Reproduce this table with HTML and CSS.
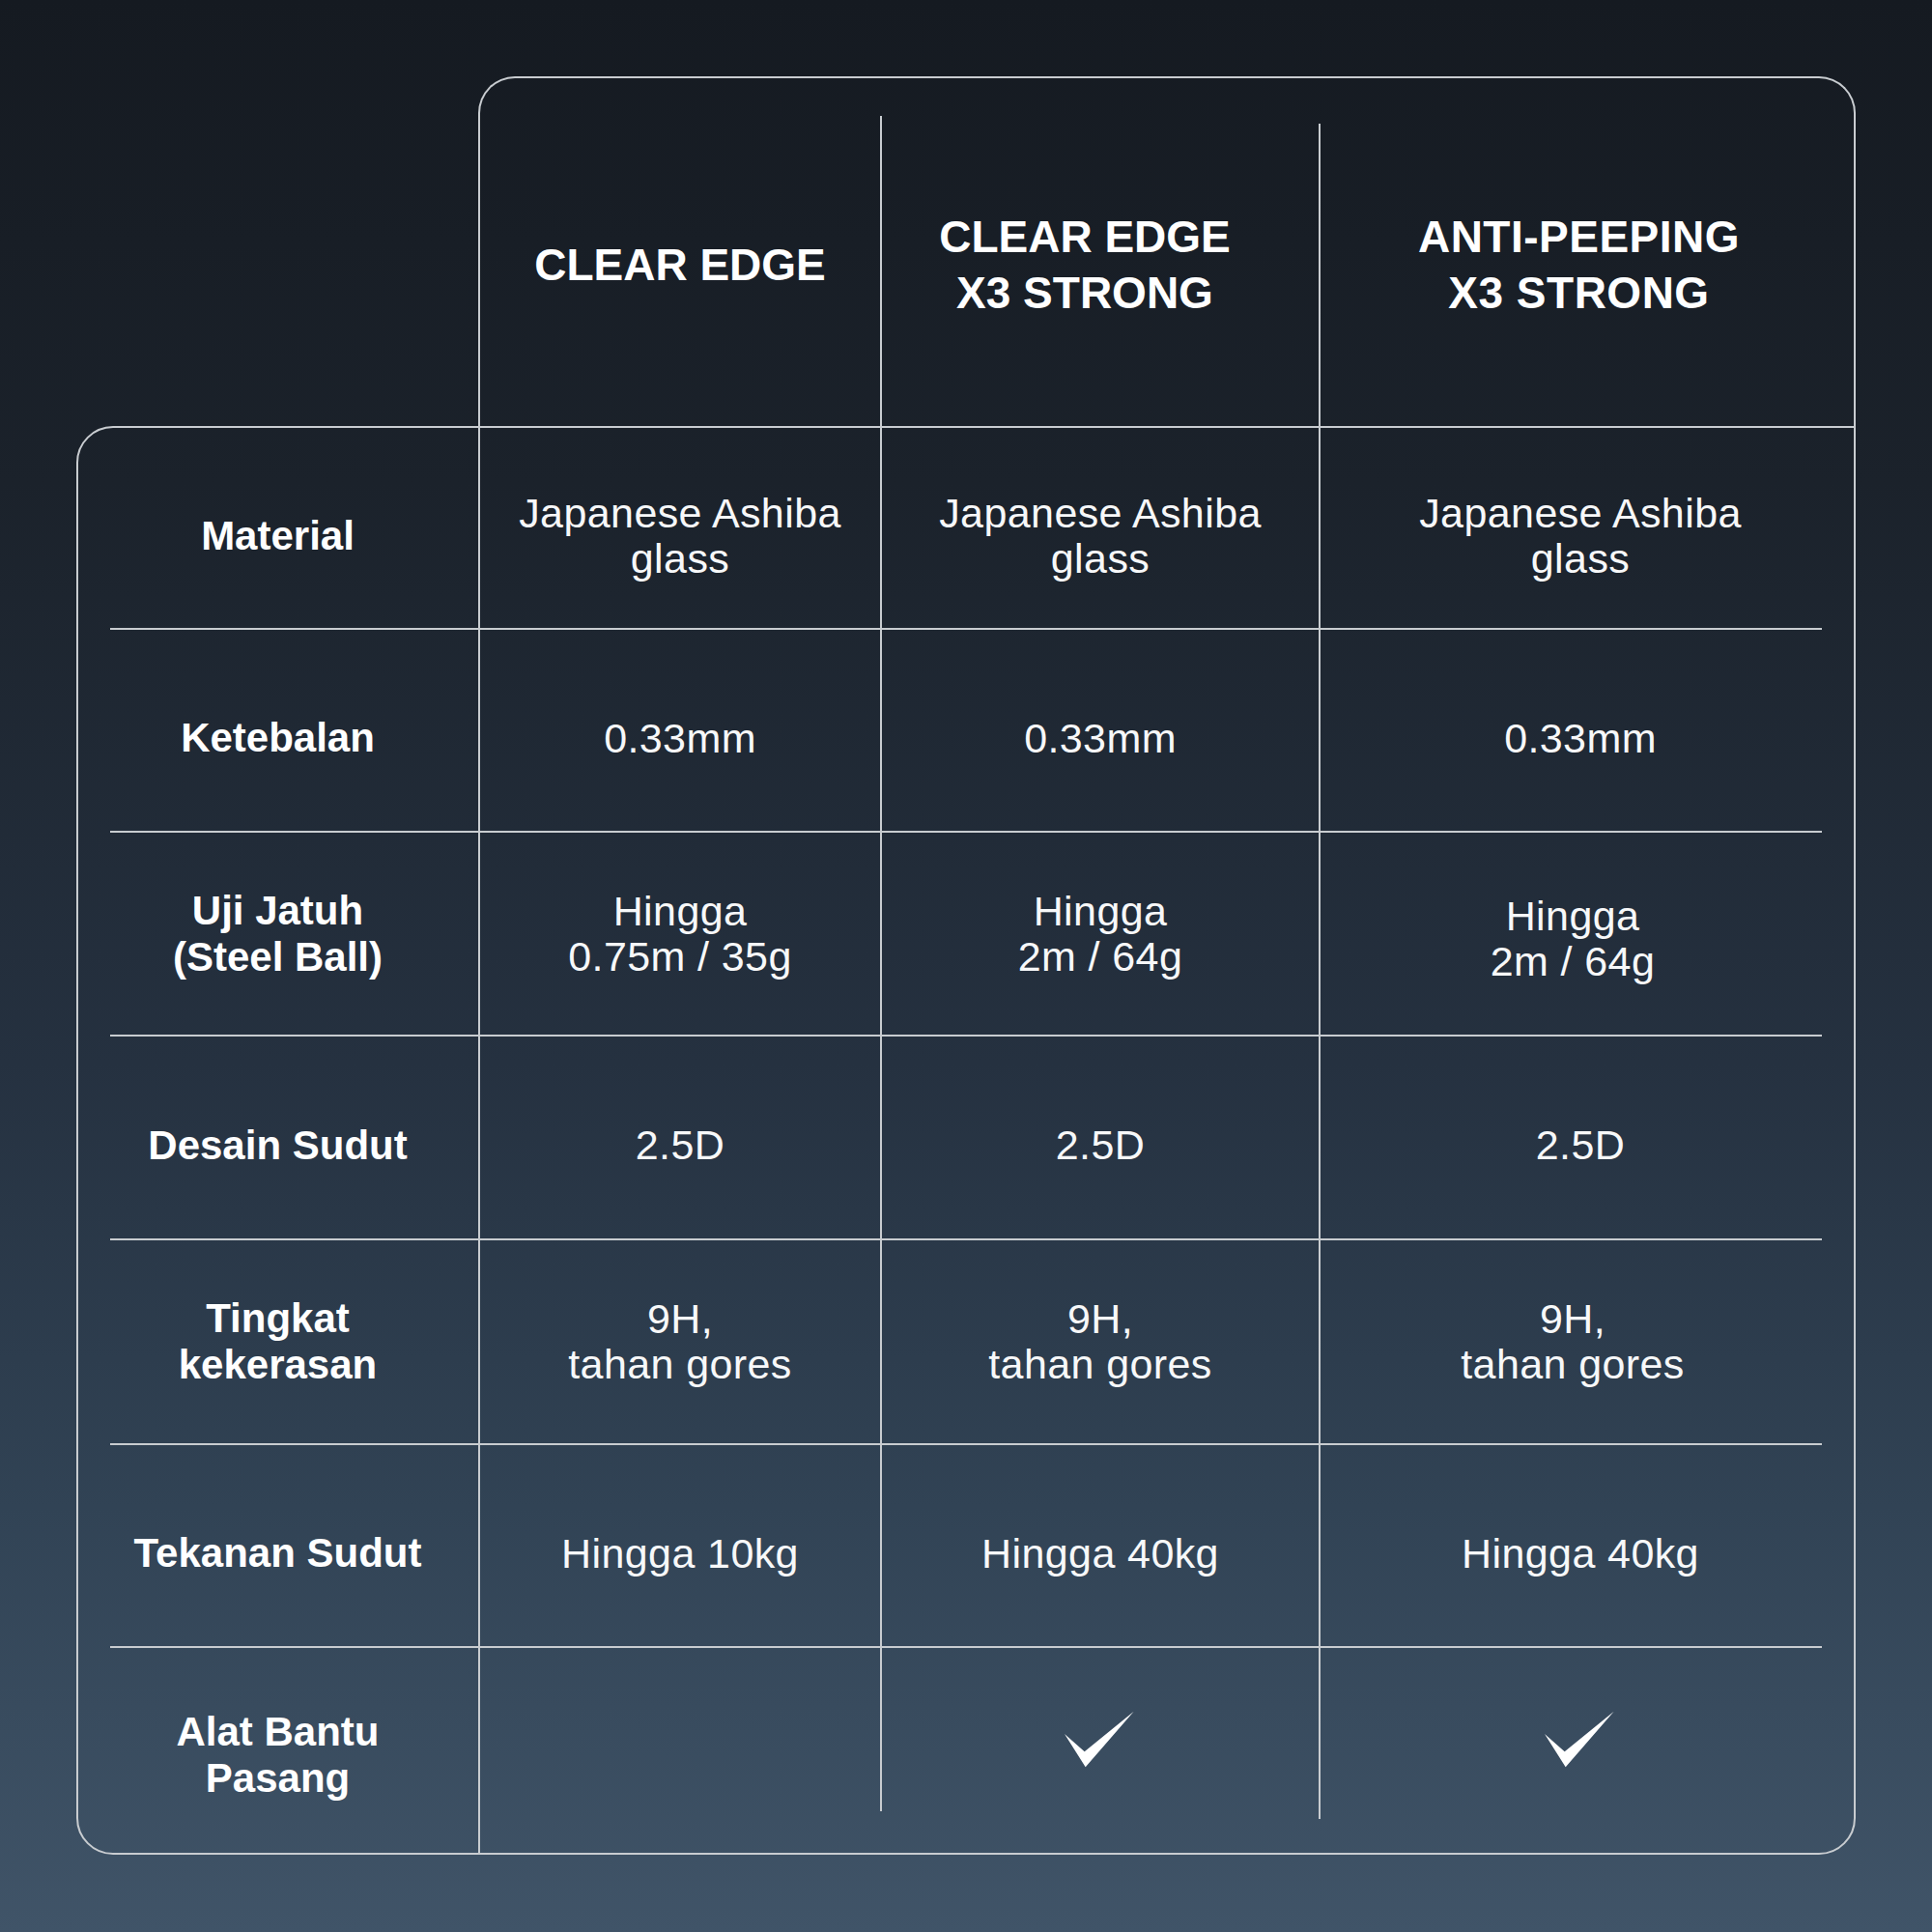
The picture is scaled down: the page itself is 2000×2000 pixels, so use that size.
FILE: index.html
```html
<!DOCTYPE html>
<html lang="id">
<head>
<meta charset="utf-8">
<title>Perbandingan Pelindung Layar</title>
<link rel="stylesheet" href="styles.css">
</head>
<body>
<main class="compare">
  <div class="head">
    <div class="hcell hc2">CLEAR EDGE</div>
    <div class="hcell hc3">CLEAR EDGE<br>X3 STRONG</div>
    <div class="hcell hc4">ANTI-PEEPING<br>X3 STRONG</div>
  </div>
  <div class="box">
    <div class="row r1 low">
      <div class="label">Material</div>
      <div class="cell c2">Japanese Ashiba<br>glass</div>
      <div class="cell c3">Japanese Ashiba<br>glass</div>
      <div class="cell c4">Japanese Ashiba<br>glass</div>
    </div>
    <div class="row r2 low">
      <div class="label">Ketebalan</div>
      <div class="cell c2">0.33mm</div>
      <div class="cell c3">0.33mm</div>
      <div class="cell c4">0.33mm</div>
    </div>
    <div class="row r3">
      <div class="label">Uji Jatuh<br>(Steel Ball)</div>
      <div class="cell c2">Hingga<br>0.75m / 35g</div>
      <div class="cell c3">Hingga<br>2m / 64g</div>
      <div class="cell c4 near down">Hingga<br>2m / 64g</div>
    </div>
    <div class="row r4 low">
      <div class="label">Desain Sudut</div>
      <div class="cell c2">2.5D</div>
      <div class="cell c3">2.5D</div>
      <div class="cell c4">2.5D</div>
    </div>
    <div class="row r5">
      <div class="label">Tingkat<br>kekerasan</div>
      <div class="cell c2">9H,<br>tahan gores</div>
      <div class="cell c3">9H,<br>tahan gores</div>
      <div class="cell c4 near">9H,<br>tahan gores</div>
    </div>
    <div class="row r6 low">
      <div class="label">Tekanan Sudut</div>
      <div class="cell c2">Hingga 10kg</div>
      <div class="cell c3">Hingga 40kg</div>
      <div class="cell c4">Hingga 40kg</div>
    </div>
    <div class="row r7">
      <div class="label">Alat Bantu<br>Pasang</div>
      <div class="cell c2"></div>
      <div class="cell c3 check">
        <svg class="tick" viewBox="0 0 74 60" width="74" height="60" aria-label="ya"><path d="M1 24 L21.7 42.3 L72.7 0.7 L22.7 58.3 Z" fill="#ffffff"/></svg>
      </div>
      <div class="cell c4 check">
        <svg class="tick" viewBox="0 0 74 60" width="74" height="60" aria-label="ya"><path d="M1 24 L21.7 42.3 L72.7 0.7 L22.7 58.3 Z" fill="#ffffff"/></svg>
      </div>
    </div>
  </div>
</main>
</body>
</html>
```
FILE: styles.css
```css
:root {
  --line: #c8ccd0;
}

* {
  box-sizing: border-box;
  margin: 0;
  padding: 0;
}

html,
body {
  width: 2000px;
  height: 2000px;
}

body {
  background: linear-gradient(180deg, #151a21 0%, #1b222b 25%, #253140 55%, #314355 78%, #405468 100%);
  font-family: "Liberation Sans", Arial, sans-serif;
  color: #ffffff;
}

.compare {
  padding: 79px 0 0 79px;
  width: 1921px;
}

/* header box */
.head {
  margin-left: 416px;
  width: 1426px;
  height: 362px;
  border: 2px solid var(--line);
  border-bottom: 0;
  border-radius: 38px 38px 0 0;
  display: grid;
  grid-template-columns: 414px 454px 554px;
}

.hcell {
  display: flex;
  align-items: center;
  justify-content: center;
  text-align: center;
  font-weight: 700;
  font-size: 46px;
  line-height: 58px;
  padding-top: 26px;
}

.hc3 {
  padding-right: 30px;
  background: linear-gradient(var(--line), var(--line)) 0 39px / 2px 100% no-repeat;
}

.hc4 {
  padding-right: 15px;
  letter-spacing: 0.5px;
  background: linear-gradient(var(--line), var(--line)) 0 47px / 2px 100% no-repeat;
}

/* body box */
.box {
  width: 1842px;
  height: 1479px;
  border: 2px solid var(--line);
  border-radius: 38px 0 38px 38px;
}

.row {
  margin: 0 33px;
  display: grid;
  grid-template-columns: 381px 416px 454px 521px;
  border-top: 2px solid var(--line);
}

.r1 { height: 207px; border-top: 0; }
.r2 { height: 210px; }
.r3 { height: 211px; }
.r4 { height: 211px; }
.r5 { height: 212px; }
.r6 { height: 210px; }
.r7 { height: 214px; }

.label,
.cell {
  display: flex;
  align-items: center;
  justify-content: center;
  text-align: center;
}

.label {
  font-weight: 700;
  font-size: 42px;
  line-height: 48px;
  padding-right: 34px;
}

.cell {
  font-size: 43px;
  line-height: 47px;
  letter-spacing: 0.4px;
  color: #f7f8f9;
  border-left: 2px solid var(--line);
}

.c4 {
  padding-left: 19px;
}

.c4.near {
  padding-left: 3px;
}

.low .label,
.low .cell {
  padding-top: 16px;
}

.cell.down {
  padding-top: 10px;
}

.r7 .label {
  padding-top: 10px;
}

.r7 .c3 {
  border-left: 0;
  background: linear-gradient(var(--line), var(--line)) 0 0 / 2px calc(100% - 43px) no-repeat;
}

.r7 .c4 {
  border-left: 0;
  background: linear-gradient(var(--line), var(--line)) 0 0 / 2px calc(100% - 35px) no-repeat;
}

.check {
  padding-bottom: 22px;
}

.tick {
  display: block;
}
```
